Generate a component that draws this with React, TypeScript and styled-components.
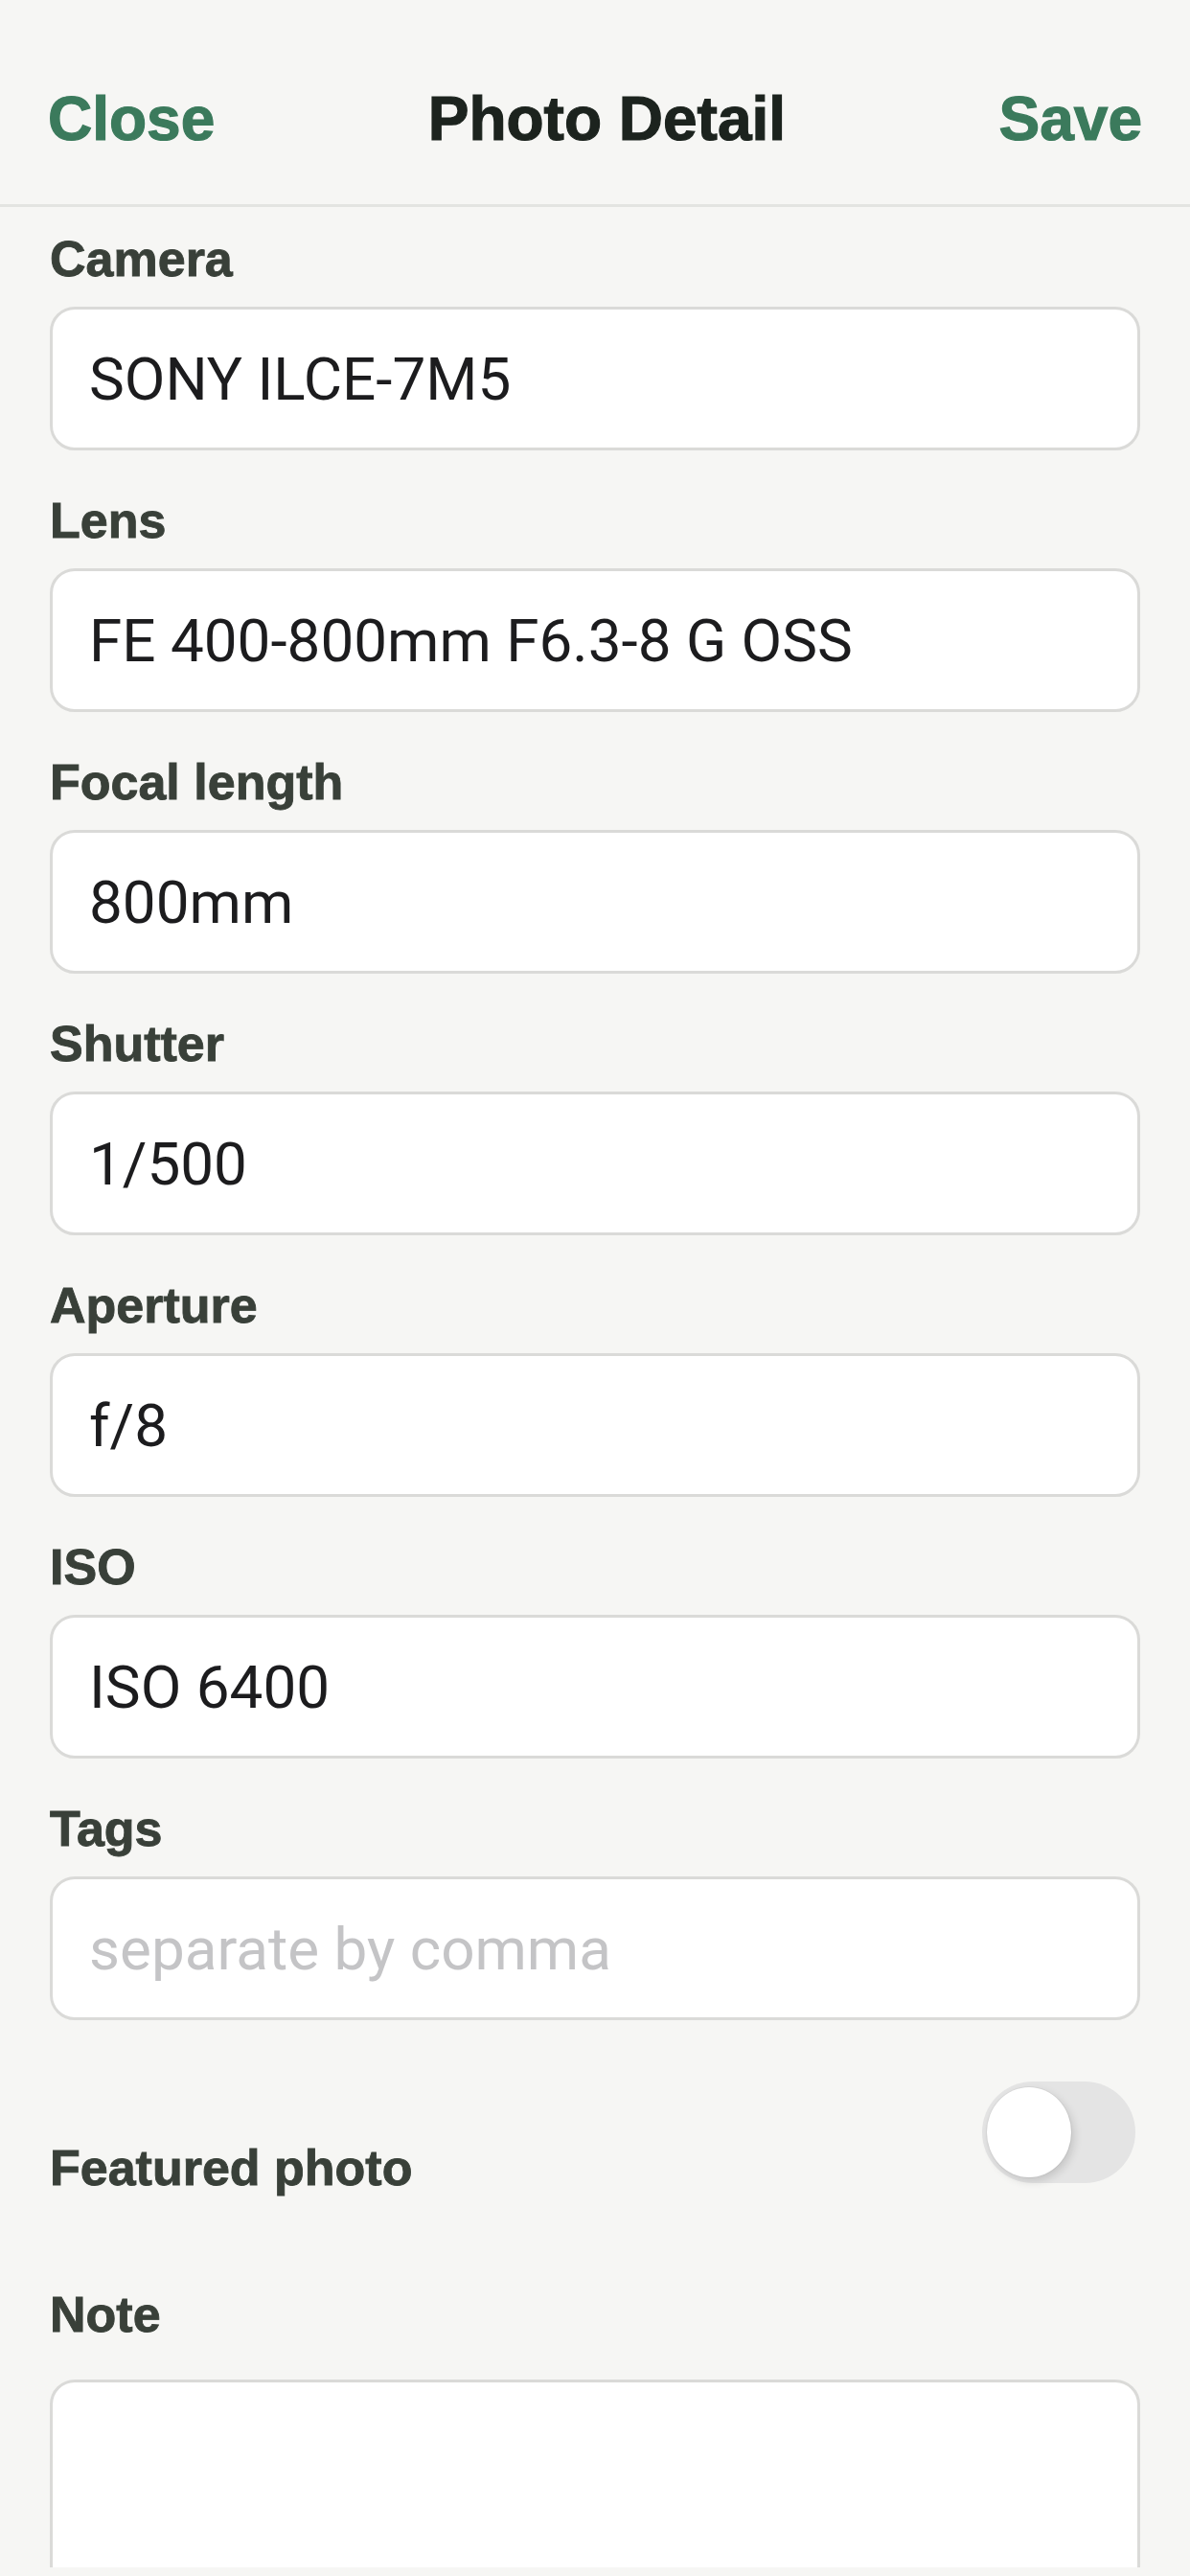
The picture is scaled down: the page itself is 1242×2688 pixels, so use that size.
import React from "react";
import styled, { createGlobalStyle } from "styled-components";

const GlobalStyle = createGlobalStyle`
  html, body {
    margin: 0;
    padding: 0;
    background: #f6f6f4;
  }
  * { box-sizing: border-box; }
`;

const Screen = styled.div`
  height: 2688px;
  display: flex;
  flex-direction: column;
  background: #f6f6f4;
  overflow: hidden;
`;

const Header = styled.header`
  margin-top: 37px;
  height: 179px;
  padding: 0 50px 3px;
  display: flex;
  align-items: center;
  justify-content: space-between;
  border-bottom: 3px solid #e3e4e1;
  font-family: "Liberation Sans", Arial, sans-serif;
  font-weight: 700;
  font-size: 64px;
  -webkit-text-stroke: 1.2px currentColor;
`;

const NavButton = styled.button`
  background: none;
  border: none;
  padding: 0;
  font: inherit;
  color: #3b7a5c;
  cursor: pointer;
  -webkit-text-stroke: inherit;
`;

const Title = styled.h1`
  margin: 0;
  font: inherit;
  color: #1c231e;
`;

const Scroll = styled.main`
  flex: 1;
  overflow: hidden;
  padding: 24px 52px 0;
  display: flex;
  flex-direction: column;
  gap: 43px;
`;

const BottomEdge = styled.div`
  height: 9px;
  flex-shrink: 0;
  background: #f6f6f4;
`;

const Field = styled.div<{ $gap?: number }>`
  display: flex;
  flex-direction: column;
  gap: ${(p) => p.$gap ?? 20}px;
`;

const Label = styled.label`
  font-family: "Liberation Sans", Arial, sans-serif;
  font-weight: 700;
  font-size: 52px;
  line-height: 60px;
  color: #394039;
  -webkit-text-stroke: 0.9px currentColor;
`;

const TextInput = styled.input`
  height: 150px;
  width: 100%;
  border: 3px solid #dadad8;
  border-radius: 26px;
  background: #ffffff;
  padding: 0 38px;
  font-family: Roboto, "Liberation Sans", Arial, sans-serif;
  font-size: 62px;
  color: #1c1c1e;
  outline: none;
  &::placeholder {
    color: #c4c4c6;
  }
`;

const NoteArea = styled.textarea`
  width: 100%;
  height: 420px;
  border: 3px solid #dadad8;
  border-radius: 26px;
  background: #ffffff;
  padding: 30px 38px;
  font-family: Roboto, "Liberation Sans", Arial, sans-serif;
  font-size: 62px;
  resize: none;
  outline: none;
`;

const ToggleRow = styled.div`
  display: flex;
  justify-content: space-between;
  align-items: flex-start;
  margin-top: 21px;
`;

const ToggleLabel = styled(Label)`
  margin-top: 60px;
`;

const Track = styled.button<{ $on: boolean }>`
  width: 160px;
  height: 106px;
  margin-right: 5px;
  padding: 6px 5px;
  border: none;
  border-radius: 53px;
  background: ${(p) => (p.$on ? "#3b7a5c" : "#e4e4e4")};
  display: flex;
  justify-content: ${(p) => (p.$on ? "flex-end" : "flex-start")};
  align-items: center;
  cursor: pointer;
`;

const Knob = styled.span`
  width: 88px;
  height: 94px;
  border-radius: 50%;
  background: #ffffff;
  box-shadow: 3px 4px 10px rgba(0, 0, 0, 0.14), 0 0 0 1px rgba(0, 0, 0, 0.04);
`;

const NoteField = styled(Field)`
  margin-top: 50px;
`;

const fields = [
  { label: "Camera", value: "SONY ILCE-7M5" },
  { label: "Lens", value: "FE 400-800mm F6.3-8 G OSS" },
  { label: "Focal length", value: "800mm" },
  { label: "Shutter", value: "1/500" },
  { label: "Aperture", value: "f/8" },
  { label: "ISO", value: "ISO 6400" },
  { label: "Tags", value: "", placeholder: "separate by comma" },
];

export default function App() {
  const [featured, setFeatured] = React.useState(false);
  return (
    <>
      <GlobalStyle />
      <Screen>
        <Header>
          <NavButton>Close</NavButton>
          <Title>Photo Detail</Title>
          <NavButton>Save</NavButton>
        </Header>
        <Scroll>
          {fields.map((f) => (
            <Field key={f.label}>
              <Label>{f.label}</Label>
              <TextInput
                readOnly
                value={f.value}
                placeholder={f.placeholder}
              />
            </Field>
          ))}
          <ToggleRow>
            <ToggleLabel>Featured photo</ToggleLabel>
            <Track $on={featured} onClick={() => setFeatured(!featured)}>
              <Knob />
            </Track>
          </ToggleRow>
          <NoteField $gap={38}>
            <Label>Note</Label>
            <NoteArea />
          </NoteField>
        </Scroll>
        <BottomEdge />
      </Screen>
    </>
  );
}
